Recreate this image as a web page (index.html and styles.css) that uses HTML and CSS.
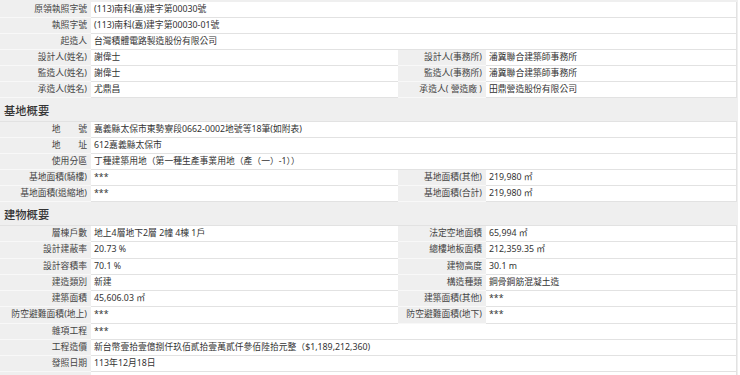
FILE: index.html
```html
<!DOCTYPE html>
<html lang="zh-Hant">
<head>
<meta charset="utf-8">
<link rel="stylesheet" href="styles.css">
</head>
<body>
<div class="page">
  <div class="group">
    <div class="row"><div class="lab">原領執照字號</div><div class="val wide">(113)南科(嘉)建字第00030號</div></div>
    <div class="row"><div class="lab">執照字號</div><div class="val wide">(113)南科(嘉)建字第00030-01號</div></div>
    <div class="row"><div class="lab">起造人</div><div class="val wide">台灣積體電路製造股份有限公司</div></div>
    <div class="row"><div class="lab">設計人(姓名)</div><div class="val">謝偉士</div><div class="lab">設計人(事務所)</div><div class="val">潘冀聯合建築師事務所</div></div>
    <div class="row"><div class="lab">監造人(姓名)</div><div class="val">謝偉士</div><div class="lab">監造人(事務所)</div><div class="val">潘冀聯合建築師事務所</div></div>
    <div class="row"><div class="lab">承造人(姓名)</div><div class="val">尤鼎昌</div><div class="lab">承造人( 營造廠 )</div><div class="val">田鼎營造股份有限公司</div></div>
  </div>
  <div class="sec">基地概要</div>
  <div class="group">
    <div class="row"><div class="lab">地　　號</div><div class="val wide">嘉義縣太保市東勢寮段0662-0002地號等18筆(如附表)</div></div>
    <div class="row"><div class="lab">地　　址</div><div class="val wide">612嘉義縣太保市</div></div>
    <div class="row"><div class="lab">使用分區</div><div class="val wide">丁種建築用地（第一種生產事業用地（產（一）-1））</div></div>
    <div class="row"><div class="lab">基地面積(騎樓)</div><div class="val">***</div><div class="lab">基地面積(其他)</div><div class="val">219,980 ㎡</div></div>
    <div class="row"><div class="lab">基地面積(退縮地)</div><div class="val">***</div><div class="lab">基地面積(合計)</div><div class="val">219,980 ㎡</div></div>
  </div>
  <div class="sec">建物概要</div>
  <div class="group g3">
    <div class="row"><div class="lab">層棟戶數</div><div class="val">地上4層地下2層 2幢 4棟 1戶</div><div class="lab">法定空地面積</div><div class="val">65,994 ㎡</div></div>
    <div class="row"><div class="lab">設計建蔽率</div><div class="val">20.73 %</div><div class="lab">總樓地板面積</div><div class="val">212,359.35 ㎡</div></div>
    <div class="row"><div class="lab">設計容積率</div><div class="val">70.1 %</div><div class="lab">建物高度</div><div class="val">30.1 m</div></div>
    <div class="row"><div class="lab">建造類別</div><div class="val">新建</div><div class="lab">構造種類</div><div class="val">鋼骨鋼筋混凝土造</div></div>
    <div class="row"><div class="lab">建築面積</div><div class="val">45,606.03 ㎡</div><div class="lab">建築面積(其他)</div><div class="val">***</div></div>
    <div class="row"><div class="lab">防空避難面積(地上)</div><div class="val">***</div><div class="lab">防空避難面積(地下)</div><div class="val">***</div></div>
    <div class="row"><div class="lab">雜項工程</div><div class="val wide">***</div></div>
    <div class="row"><div class="lab">工程造價</div><div class="val wide">新台幣壹拾壹億捌仟玖佰貳拾壹萬貳仟參佰陸拾元整（$1,189,212,360)</div></div>
    <div class="row"><div class="lab">發照日期</div><div class="val wide">113年12月18日</div></div>
    <div class="row"><div class="lab">&nbsp;</div><div class="val wide">&nbsp;</div></div>
  </div>
</div>
</body>
</html>
```
FILE: styles.css
```css
html, body {
  margin: 0;
  padding: 0;
  background: #ffffff;
}
.page {
  width: 738px;
  height: 375px;
  overflow: hidden;
  padding-top: 2px;
  box-sizing: border-box;
  background: #efefef;
  font-family: "Noto Sans", "Noto Sans CJK TC", sans-serif;
  font-size: 8.8px;
  color: #333;
}
.group {
  width: 737px;
  background: #fff;
  border-right: 1px solid #e2e2e2;
  box-sizing: border-box;
}
.row {
  display: grid;
  grid-template-columns: 91px 307px 88px 1fr;
  height: 16px;
}
.g3 .row {
  height: 16.25px;
}
.lab, .val {
  box-sizing: border-box;
  border-bottom: 1px solid #e2e2e2;
  line-height: 15px;
  white-space: nowrap;
  overflow: hidden;
  display: flex;
  align-items: center;
}
.lab {
  background: #efefef;
  justify-content: flex-end;
  padding-right: 4px;
  color: #444;
  border-bottom-color: #f8f8f8;
}
.val {
  padding-left: 3px;
  background: #fff;
}
.val.wide {
  grid-column: 2 / 5;
}
.sec {
  width: 737px;
  height: 24px;
  box-sizing: border-box;
  border-bottom: 1px solid #e2e2e2;
  background: #efefef;
  font-family: "Noto Sans CJK TC", sans-serif;
  font-size: 11.3px;
  font-weight: 500;
  color: #333;
  padding-left: 4px;
  display: flex;
  align-items: center;
}
```
